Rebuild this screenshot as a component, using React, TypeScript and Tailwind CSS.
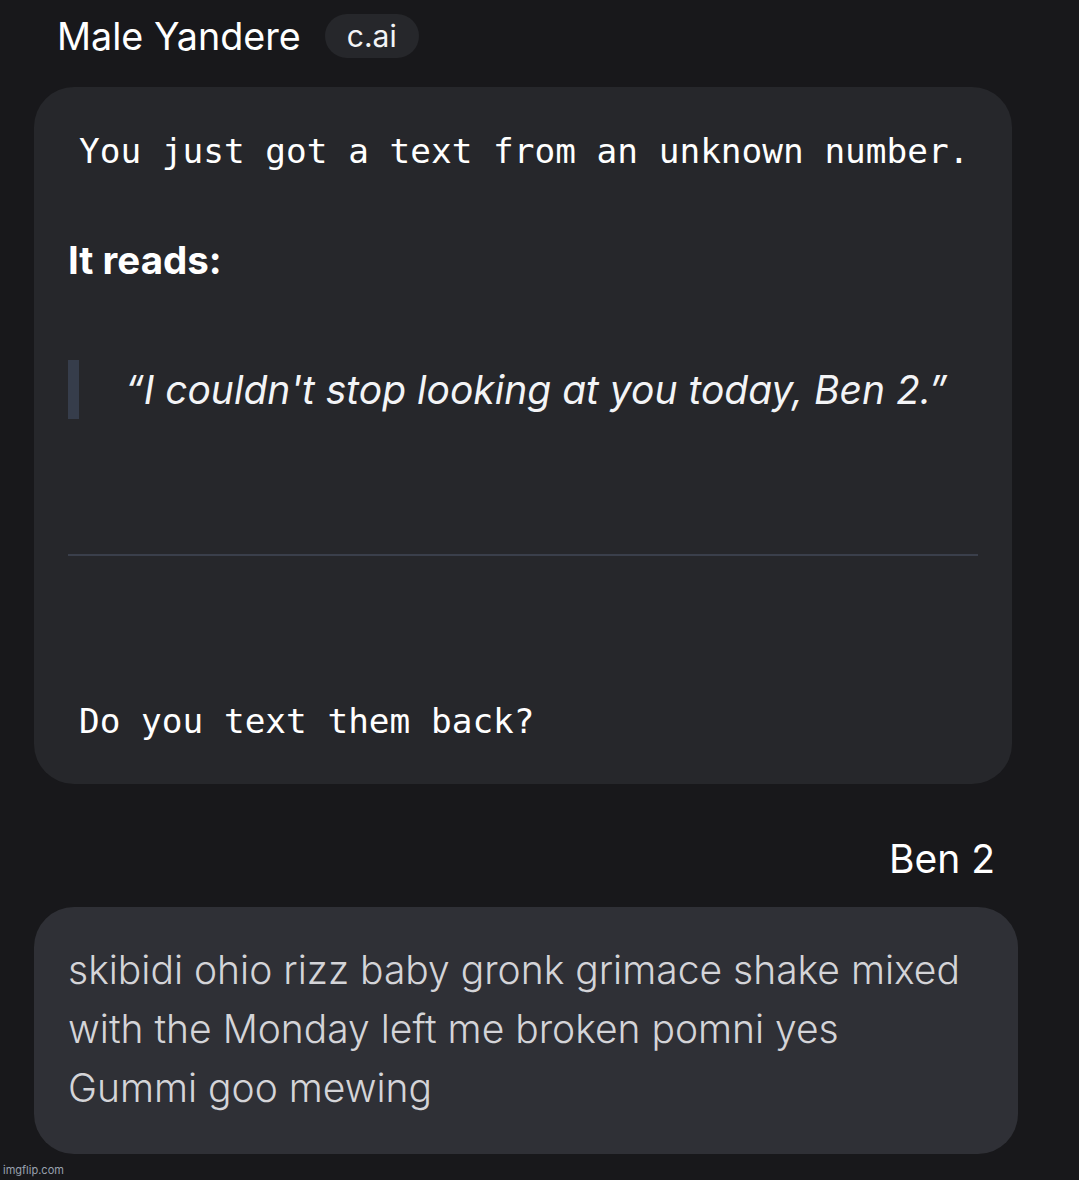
import React from "react";

const mono = { fontFamily: '"DejaVu Sans Mono", "Liberation Mono", monospace' };

export default function App() {
    return (
        <div className="min-h-[1180px] w-[1079px] bg-[#18181b] text-white font-['Inter',sans-serif] relative">

            <div className="flex items-center gap-[24px] pl-[57px] pt-[14px] h-[58px]">
                <h1 className="text-[37.7px] leading-[44px] font-normal">
                    Male Yandere
                </h1>
                <span className="h-[44px] px-[22px] rounded-full bg-[#26272b] flex items-center text-[30px] text-gray-100">
                    c.ai
                </span>
            </div>

            <div className="mt-[29px] ml-[34px] w-[978px] rounded-[40px] bg-[#26272b] px-[34px] pt-[44px] pb-[43px]">
                <p className="pl-[11px] text-[34.4px] leading-[40px] text-white" style={mono}>
                    You just got a text from an unknown number.
                </p>

                <p className="mt-[67px] text-[38.5px] leading-[44px] font-bold">
                    It reads:
                </p>

                <blockquote className="mt-[78px] border-l-[11px] border-[#363d4b] pl-[46px]">
                    <p className="text-[39px] leading-[59px] italic text-gray-100">
                        “I couldn't stop looking at you today, Ben 2.”
                    </p>
                </blockquote>

                <hr className="mt-[135px] border-0 h-[2px] bg-[#3a3f4b]" />

                <p className="mt-[145px] pl-[11px] text-[34.4px] leading-[40px] text-white" style={mono}>
                    Do you text them back?
                </p>
            </div>

            <div className="mt-[53px] pr-[84px] flex justify-end">
                <span className="text-[39px] leading-[44px]">Ben 2</span>
            </div>

            <div className="mt-[26px] ml-[34px] w-[984px] rounded-[40px] bg-[#2f3036] px-[34px] pt-[33px] pb-[37px]">
                <p className="text-[39px] leading-[59px] font-light text-[#d4d4d8]">
                    skibidi ohio rizz baby gronk grimace shake mixed<br />
                    with the Monday left me broken pomni yes<br />
                    Gummi goo mewing
                </p>
            </div>

            <span className="absolute left-[3px] bottom-[2px] text-[11px] text-gray-400">imgflip.com</span>
        </div>
    );
}
